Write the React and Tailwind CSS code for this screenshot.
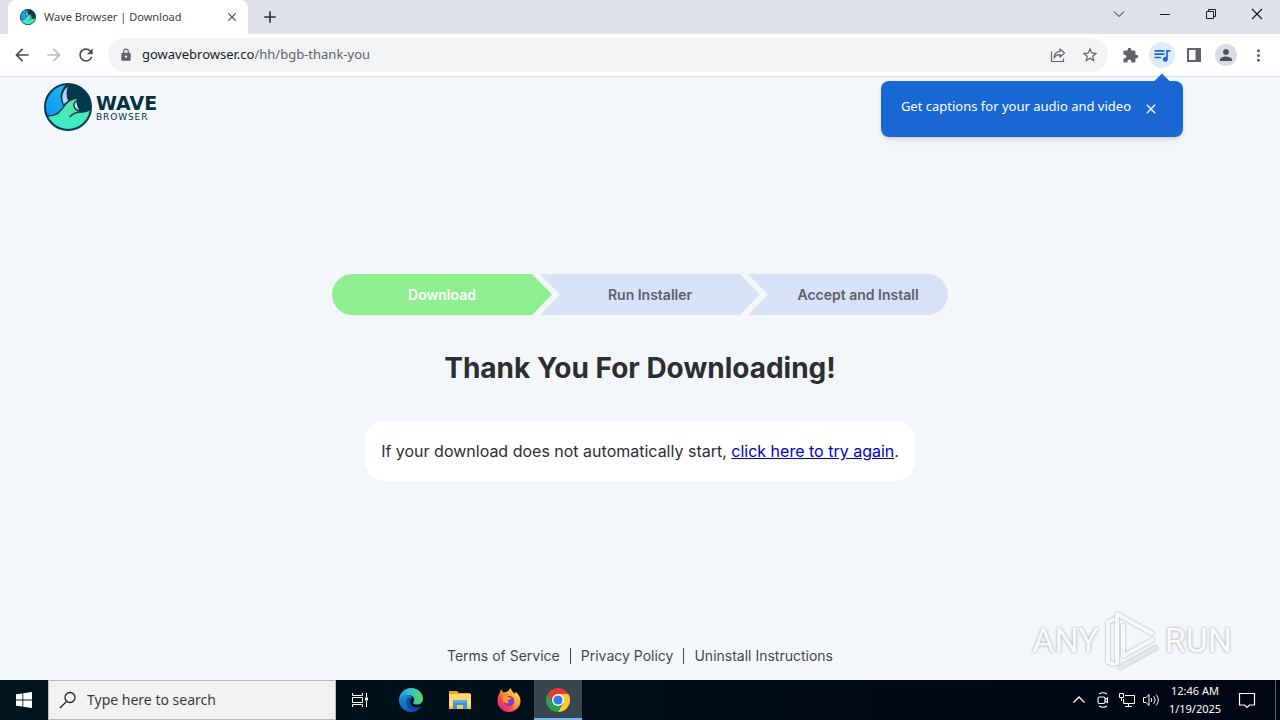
import React, { useState } from "react";
import {
  MdAdd,
  MdArrowBack,
  MdArrowForward,
  MdClose,
  MdExtension,
  MdLock,
  MdMoreVert,
  MdPerson,
  MdQueueMusic,
  MdRefresh,
  MdStarBorder,
} from "react-icons/md";

const WaveLogo = ({ id, className }) => (
  <svg viewBox="0 0 48 48" className={className} aria-hidden="true">
    <defs>
      <clipPath id={`${id}-clip`}>
        <circle cx="24" cy="24" r="23" />
      </clipPath>
      <linearGradient id={`${id}-blue`} x1="0" y1="1" x2="1" y2="0">
        <stop offset="0" stopColor="#0a8cf5" />
        <stop offset="1" stopColor="#20c4f2" />
      </linearGradient>
      <linearGradient id={`${id}-green`} x1="0" y1="0" x2="0" y2="1">
        <stop offset="0" stopColor="#5fe3a0" />
        <stop offset="1" stopColor="#2ff0d2" />
      </linearGradient>
    </defs>
    <g clipPath={`url(#${id}-clip)`} stroke="#05374d" strokeWidth="1.4" strokeLinejoin="round">
      <rect width="48" height="48" fill="#05374d" />
      <path d="M-2 34V-2h30C18 4 15 12 19 20l5 6-8 10z" fill={`url(#${id}-blue)`} />
      <path d="M26 1.500C18 6 15.500 14 19.500 22l5.500-4C22.500 13 22.500 6 26 1.500z" fill="#b9d3e6" />
      <path
        d="M-1 32.500c9 1 14 0 18.500-6 4-6 8-11 17.500-11.500C31 18 32 24 37.500 28.500c3.500 0 7-1.500 11-5V50H-1z"
        fill={`url(#${id}-green)`}
      />
      <path d="M33 17.500c-5 3-4 9.500 4 11-2.500-3.500-4-7-4-11z" fill="#cfe3ee" />
      <path d="M48 24c-3 4-7 5-11 5-5 0-8 1.500-11 4.500" fill="none" strokeLinecap="round" />
    </g>
    <circle cx="24" cy="24" r="23" fill="none" stroke="#05374d" strokeWidth="2" />
  </svg>
);

const ShareIcon = () => (
  <svg viewBox="0 0 16 16" className="size-4" fill="none" stroke="#5f6368" strokeWidth="1.200" strokeLinejoin="round">
    <path d="M1.500 4.500v10h12v-3" />
    <path d="M10 2l4.500 4L10 10V7.600C7 7.600 5.200 8.800 4 11c.300-3.800 2.300-6.300 6-6.600z" />
  </svg>
);

const SidePanelIcon = () => (
  <svg viewBox="0 0 16 16" className="size-4">
    <path fill="#5f6368" fillRule="evenodd" d="M1 1h14v14H1zM3 3v10h6.500V3z" />
  </svg>
);

const EdgeIcon = () => (
  <svg viewBox="0 0 24 24" className="size-6">
    <defs>
      <linearGradient id="edge-top" x1="0" y1="0.500" x2="1" y2="0.400">
        <stop offset="0" stopColor="#1b9de2" />
        <stop offset="0.500" stopColor="#34c1c8" />
        <stop offset="1" stopColor="#66d94f" />
      </linearGradient>
      <linearGradient id="edge-side" x1="0" y1="0" x2="0.600" y2="1">
        <stop offset="0" stopColor="#1a94e0" />
        <stop offset="1" stopColor="#0a57b0" />
      </linearGradient>
    </defs>
    <path fill="url(#edge-side)" d="M0 12c0-4 5-6.500 9-5.500 2.500.600 4 2 4 3.500-4 .500-5 5-2 8 3 2.600 7 2.500 11 .500C20 22 16.500 24 12 24 5.400 24 0 18.600 0 12z" />
    <path fill="#104a97" d="M9.500 9.500C6 12 6.500 19 12 21.500c3.500 1.200 7.500 0 10.300-3-3.800 1.700-8 1.200-10-1.500-1.500-2-1.300-4 .200-5.500z" />
    <path fill="url(#edge-top)" d="M0 12C.200 5 5.500 0 12 0c7.500 0 12 5.500 12 10.500 0 4-3 6-6 6-2.500 0-4-.800-3.800-1.800.300-.800 1.200-1.300 1-3C15 9 12.500 7 9 7c-4.500 0-8 2-9 5z" />
  </svg>
);

const ExplorerIcon = () => (
  <svg viewBox="0 0 24 24" className="size-6">
    <path fill="#e9a825" d="M1 3h8l2 2h11v4H1z" />
    <path fill="#ffd970" d="M1 6h22v15H1z" />
    <path fill="#f7c64a" d="M1 18h22v3H1z" />
    <path fill="#3a94d6" d="M5 13.500c0-1 .500-1.500 1.500-1.500h11c1 0 1.500.500 1.500 1.500V21h-4v-4H9v4H5z" />
    <path fill="#62aee3" d="M6.500 12h11c1 0 1.500.500 1.500 1.500v1H5v-1c0-1 .500-1.500 1.500-1.500z" />
  </svg>
);

const FirefoxIcon = () => (
  <svg viewBox="0 0 24 24" className="size-6">
    <defs>
      <linearGradient id="fox-body" x1="0.900" y1="0.100" x2="0.200" y2="0.950">
        <stop offset="0" stopColor="#fff14a" />
        <stop offset="0.400" stopColor="#ff9a2a" />
        <stop offset="0.700" stopColor="#ff4848" />
        <stop offset="1" stopColor="#e0248c" />
      </linearGradient>
    </defs>
    <path
      fill="url(#fox-body)"
      d="M3 4.500C3.300 3 3.600 2 4.500 1c0 1.500.700 2.500 2 3.500 1-.500 2-.700 3-.500C10.500 3.500 12 2 14 0c0 2 1 3 2.500 4.500L18 6c.500-.800.500-1.800.300-2.500C21.500 6 23.500 9 23.500 13c0 6-5 11-11.500 11S.500 19 .500 13C.500 9.500 1.500 6.500 3 4.500z"
    />
    <circle cx="12" cy="13" r="5.200" fill="#7a3bd6" />
    <path fill="#ff9a2a" d="M5.500 9c2-1.700 4-1.500 6 .300 1 .300 2 .200 3 .700-.500 1.500-2 1.500-3 2-.500 1.500-.500 2 .500 3-3 1-5-.500-6-2.500z" />
    <path fill="#ffbd33" d="M14 4c4 2.500 6 6 4.500 11 1.500-1 2-3 2-5 1.500 6-2 12-8.500 12 5-1 7-4.500 6-9-.500-3-3-5-4-9z" opacity="0.700" />
  </svg>
);

const ChromeIcon = () => (
  <svg viewBox="0 0 24 24" className="size-6">
    <path fill="#fcc934" d="M12 12V6h10.400A12 12 0 0 1 12 24l5.200-9z" />
    <path fill="#2da14c" d="M12 24A12 12 0 0 1 1.600 6l5.200 9c1 1.700 3 3 5.200 3l3.500-1z" />
    <path fill="#e33b2e" d="M1.600 6L6.800 15 12 6h10.400A12 12 0 0 0 1.600 6z" />
    <circle cx="12" cy="12" r="6" fill="#fff" />
    <circle cx="12" cy="12" r="4.600" fill="#2f7de9" />
  </svg>
);

const TaskViewIcon = () => (
  <svg viewBox="0 0 18 18" className="size-[18px]" fill="none" stroke="#fff" strokeWidth="1">
    <path d="M1.500 2v2.500h10V2M1.500 16v-2.500h10V16M1.500 6.500h10v5h-10zM15.500 2v4M15.500 10v6" />
    <path d="M14 6.500h3v3h-3z" fill="#fff" stroke="none" />
  </svg>
);

const WindowControls = () => (
  <div className="flex h-7 text-[#1b1b1b]">
    <button aria-label="Search tabs" className="flex w-[46px] items-center justify-center">
      <svg viewBox="0 0 12 12" className="size-3" fill="none" stroke="currentColor">
        <path d="M1 3.500l5 5 5-5" />
      </svg>
    </button>
    <button aria-label="Minimize" className="flex w-[46px] items-center justify-center">
      <svg viewBox="0 0 12 12" className="size-3" fill="none" stroke="currentColor">
        <path d="M1 6.500h10" />
      </svg>
    </button>
    <button aria-label="Restore" className="flex w-[46px] items-center justify-center">
      <svg viewBox="0 0 12 12" className="size-3" fill="none" stroke="currentColor">
        <path d="M1.500 3.500h7v7h-7zM3.500 3.500v-2h7v7h-2" />
      </svg>
    </button>
    <button aria-label="Close" className="flex w-[46px] items-center justify-center">
      <svg viewBox="0 0 12 12" className="size-3" fill="none" stroke="currentColor" strokeWidth="1.200">
        <path d="M1 1l10 10M11 1L1 11" />
      </svg>
    </button>
  </div>
);

const TabStrip = () => (
  <div className="flex h-[34px] items-start justify-between bg-[#dee1e8]">
    <div className="flex h-full items-end pl-2">
      <div className="flex h-full w-60 items-center rounded-t-lg bg-white pr-2 pl-3">
        <WaveLogo id="tab" className="size-4 shrink-0" />
        <span className="ml-2 flex-1 truncate text-[11px] text-[#3c4043]">Wave Browser | Download</span>
        <button aria-label="Close tab" className="flex size-4 items-center justify-center text-[#45494d]">
          <MdClose size={14} />
        </button>
      </div>
      <button aria-label="New tab" className="flex h-full w-11 items-center justify-center text-[#303438]">
        <MdAdd size={20} />
      </button>
    </div>
    <WindowControls />
  </div>
);

const CaptionsBubble = ({ onClose }) => (
  <div className="absolute top-[47px] right-[97px] z-10 flex h-14 items-center rounded-lg bg-[#1967d2] pr-6 pl-5 text-white shadow-md">
    <span className="absolute -top-[5px] right-[15px] size-3 rotate-45 bg-[#1967d2]" />
    <p className="pb-1 text-[13px]">Get captions for your audio and video</p>
    <button aria-label="Dismiss" onClick={onClose} className="ml-3 flex size-4 items-center justify-center">
      <MdClose size={16} />
    </button>
  </div>
);

const Toolbar = () => {
  const [showBubble, setShowBubble] = useState(true);

  return (
    <div className="relative flex h-[43px] items-center gap-[6px] border-b border-[#d9dcde] bg-white px-[6px] text-[#5f6368]">
      <div className="flex">
        <button aria-label="Back" className="flex size-8 items-center justify-center text-[#4a4e52]">
          <MdArrowBack size={20} />
        </button>
        <button aria-label="Forward" className="flex size-8 items-center justify-center text-[#babcbe]">
          <MdArrowForward size={20} />
        </button>
        <button aria-label="Reload" className="flex size-8 items-center justify-center text-[#4a4e52]">
          <MdRefresh size={20} />
        </button>
      </div>
      <div className="flex h-[34px] flex-1 items-center rounded-full bg-[#f1f3f4] pr-[2px] pl-[11px]">
        <MdLock size={14} />
        <p className="ml-[9px] flex-1 text-[13px] text-[#5f6368]">
          <span className="text-[#202124]">gowavebrowser.co</span>/hh/bgb-thank-you
        </p>
        <button aria-label="Share this page" className="flex size-8 items-center justify-center">
          <ShareIcon />
        </button>
        <button aria-label="Bookmark this tab" className="flex size-8 items-center justify-center">
          <MdStarBorder size={18} />
        </button>
      </div>
      <div className="flex items-center">
        <button aria-label="Extensions" className="flex size-8 items-center justify-center">
          <MdExtension size={17} />
        </button>
        <button aria-label="Media controls" className="flex size-8 items-center justify-center text-[#1967d2]">
          <span className="flex size-[26px] items-center justify-center rounded-full bg-[#dfeafb]">
            <MdQueueMusic size={20} />
          </span>
        </button>
        <button aria-label="Side panel" className="flex size-8 items-center justify-center">
          <SidePanelIcon />
        </button>
        <button aria-label="Profile" className="flex size-8 items-center justify-center">
          <span className="flex size-[22px] items-center justify-center rounded-full bg-[#dadce3] text-[#4b5160]">
            <MdPerson size={18} />
          </span>
        </button>
        <button aria-label="Menu" className="flex size-8 items-center justify-center">
          <MdMoreVert size={19} />
        </button>
      </div>
      {showBubble && <CaptionsBubble onClose={() => setShowBubble(false)} />}
    </div>
  );
};

const Steps = () => (
  <ol className="flex h-[41px] text-sm font-semibold text-[#5c606b]">
    <li className="-mr-3 flex w-[220px] items-center justify-center rounded-l-full bg-[#8fee90] text-white [clip-path:polygon(0_0,200px_0,100%_50%,200px_100%,0_100%)]">
      Download
    </li>
    <li className="-mr-3 flex w-[220px] items-center justify-center bg-[#d8e2f7] [clip-path:polygon(0_0,200px_0,100%_50%,200px_100%,0_100%,20px_50%)]">
      Run Installer
    </li>
    <li className="flex w-[200px] items-center justify-center rounded-r-full bg-[#d8e2f7] pl-5 [clip-path:polygon(0_0,100%_0,100%_100%,0_100%,20px_50%)]">
      Accept and Install
    </li>
  </ol>
);

const Watermark = () => (
  <div className="absolute right-12 bottom-2 flex h-16 items-center gap-1 font-['Roboto',sans-serif] text-[34px] text-[#f8f9fa] [text-shadow:0_0_3px_#96999c]">
    <span>ANY</span>
    <svg viewBox="0 0 58 64" className="h-16 w-[58px] drop-shadow-[0_0_1px_#a0a4a8]" fill="none" stroke="#f6f7f8" strokeWidth="4" strokeLinejoin="round">
      <path d="M12 11L5 14v40l7 3M14 57V6l36 20M20 16v32l31-17" />
      <path d="M16 60l38-21" stroke="#e6e7e8" />
    </svg>
    <span>RUN</span>
  </div>
);

const Page = () => (
  <div className="relative flex flex-1 flex-col bg-[#f4f7fa] font-['Inter',sans-serif] text-[#2b2e33]">
    <header className="flex items-center gap-1 pt-[6px] pl-11">
      <WaveLogo id="site" className="size-12" />
      <div className="font-['DejaVu_Sans',sans-serif] text-[#05303f]">
        <p className="text-[19px] leading-5 font-bold">WAVE</p>
        <p className="text-[9px] leading-2 tracking-widest">BROWSER</p>
      </div>
    </header>
    <main className="flex flex-1 flex-col items-center justify-center gap-[35px]">
      <Steps />
      <h1 className="text-[28px] leading-9 font-bold">Thank You For Downloading!</h1>
      <p className="rounded-[20px] bg-white px-4 py-[18px] text-base">
        If your download does not automatically start,{" "}
        <a href="#download" className="text-[#0000c8] underline">
          click here to try again
        </a>
        .
      </p>
    </main>
    <footer className="flex justify-center pt-[22px] pb-[14px] text-sm text-[#44484d]">
      <a href="#terms" className="pr-[10px]">Terms of Service</a>
      <a href="#privacy" className="self-center border-x border-[#44484d] px-[10px] leading-4">Privacy Policy</a>
      <a href="#uninstall" className="pl-[10px]">Uninstall Instructions</a>
    </footer>
    <Watermark />
  </div>
);

const Taskbar = () => (
  <div className="flex h-10 items-stretch bg-linear-to-r from-[#01161f] to-[#000613] text-white">
    <button aria-label="Start" className="flex w-12 items-center justify-center">
      <svg viewBox="0 0 16 16" className="size-4" fill="#fff">
        <path d="M0 2.300l6.500-.9v6.100H0zM7.300 1.300L16 0v7.500H7.300zM0 8.400h6.500v6.200L0 13.700zM7.300 8.400H16V16l-8.700-1.200z" />
      </svg>
    </button>
    <label className="flex w-72 items-center border border-[#b9babb] bg-[#f2f2f2] pl-[10px]">
      <svg viewBox="0 0 18 18" className="size-[18px] shrink-0" fill="none" stroke="#222" strokeWidth="1.300">
        <circle cx="11" cy="6.500" r="5" />
        <path d="M7.500 10.500L1 17" />
      </svg>
      <input
        type="text"
        aria-label="Search"
        placeholder="Type here to search"
        className="ml-[10px] w-full min-w-0 bg-transparent text-sm outline-none placeholder:text-[#3a3a3a]"
      />
    </label>
    <button aria-label="Task View" className="mr-[3px] flex w-12 items-center justify-center">
      <TaskViewIcon />
    </button>
    <div className="flex gap-px">
      <button aria-label="Microsoft Edge" className="flex w-12 items-center justify-center">
        <EdgeIcon />
      </button>
      <button aria-label="File Explorer" className="flex w-12 items-center justify-center">
        <ExplorerIcon />
      </button>
      <button aria-label="Firefox" className="flex w-12 items-center justify-center">
        <FirefoxIcon />
      </button>
      <button aria-label="Google Chrome" className="flex w-12 items-center justify-center border-b-2 border-[#76b9ed] bg-[#37464f] pt-[2px]">
        <ChromeIcon />
      </button>
    </div>
    <div className="ml-auto flex items-stretch">
      <button aria-label="Show hidden icons" className="flex w-6 items-center justify-center">
        <svg viewBox="0 0 14 14" className="size-[14px]" fill="none" stroke="#fff" strokeWidth="1.300">
          <path d="M1.500 9.500L7 4l5.500 5.500" />
        </svg>
      </button>
      <button aria-label="Meet Now" className="flex w-6 items-center justify-center">
        <svg viewBox="0 0 16 16" className="size-4" fill="none" stroke="#fff" strokeWidth="1.100">
          <path d="M4 2c2.500-1.500 5.500-1.500 8 0M4 14c2.500 1.500 5.500 1.500 8 0" />
          <rect x="3" y="5" width="7" height="6.500" rx="1.500" />
          <path d="M10 7.500l2.500-1.500v4.500L10 9" />
        </svg>
      </button>
      <button aria-label="Network" className="flex w-6 items-center justify-center">
        <svg viewBox="0 0 16 16" className="size-4" fill="none" stroke="#fff" strokeWidth="1">
          <path d="M6 3.500h9.500v8H4.500V7M9.500 11.500v3M6 14.500h7" />
          <path d="M.500 1.500h4v4h-4zM2.500 5.500V9" />
        </svg>
      </button>
      <button aria-label="Volume" className="flex w-6 items-center justify-center">
        <svg viewBox="0 0 16 16" className="size-4" fill="none" stroke="#fff" strokeWidth="1">
          <path d="M.500 5.500h2.500l3-3v11l-3-3H.500zM8 6c1 1.300 1 2.700 0 4M10.500 4.200c2 2.300 2 5.300 0 7.600M13 2.500c3 3.500 3 7.500 0 11" />
        </svg>
      </button>
      <div className="ml-1 flex w-14 flex-col justify-center text-center text-[11px] leading-[18px] whitespace-nowrap">
        <time>12:46 AM</time>
        <time>1/19/2025</time>
      </div>
      <button aria-label="Notifications" className="flex w-12 items-center justify-center">
        <svg viewBox="0 0 18 18" className="size-[18px]" fill="none" stroke="#fff" strokeWidth="1.200">
          <path d="M1.500 2.500h15v11.500h-5l-2.500 2.500L6.500 14h-5z" />
        </svg>
      </button>
      <button aria-label="Show desktop" className="ml-1 w-[5px] border-l border-[#5a6268]" />
    </div>
  </div>
);

const App = () => {
  return (
    <div className="flex min-h-screen flex-col font-['Noto_Sans','Open_Sans',sans-serif]">
      <TabStrip />
      <Toolbar />
      <Page />
      <Taskbar />
    </div>
  );
};

export default App;
